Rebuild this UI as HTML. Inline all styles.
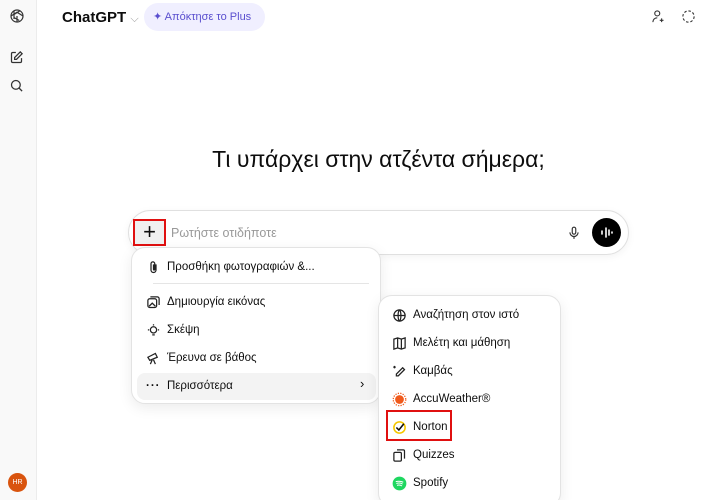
<!DOCTYPE html>
<html><head><meta charset="utf-8"><style>
*{box-sizing:border-box;margin:0;padding:0}
html,body{width:721px;height:500px;overflow:hidden}
body{background:#fff;font-family:"Liberation Sans","DejaVu Sans",sans-serif;color:#0d0d0d;position:relative}
.side{position:absolute;left:0;top:0;width:37px;height:500px;background:#f9f9f9;border-right:1px solid #ececec}
.abs{position:absolute}
.menu{position:absolute;background:#fff;border:1px solid #e3e3e3;border-radius:14px;box-shadow:0 4px 14px rgba(0,0,0,.08)}
.it{position:absolute;left:0;font-size:11.5px;display:flex;align-items:center;height:20px}
.it svg{width:15px;height:15px;margin-right:6px}
</style></head><body>
<div class="side">
 <svg class="abs" style="left:8px;top:7px" width="18" height="18" viewBox="0 0 24 24" fill="none" stroke="#333" stroke-width="1.6"><circle cx="12" cy="12" r="8"/><path d="M8 5v9l7 4M16 5l-8 5v6M4 12l8-5 8 5M12 20v-8"/></svg>
 <svg class="abs" style="left:9px;top:50px" width="15" height="15" viewBox="0 0 24 24" fill="none" stroke="#333" stroke-width="2"><path d="M11 4H6a2 2 0 0 0-2 2v12a2 2 0 0 0 2 2h12a2 2 0 0 0 2-2v-5"/><path d="M18 3l3 3-9 9H9v-3z"/></svg>
 <svg class="abs" style="left:9px;top:78px" width="15" height="15" viewBox="0 0 24 24" fill="none" stroke="#333" stroke-width="2"><circle cx="11" cy="11" r="7"/><path d="M16 16l5 5"/></svg>
 <div class="abs" style="left:8px;top:473px;width:19px;height:19px;border-radius:50%;background:#d9540e;color:#fff;font-size:7px;line-height:19px;text-align:center">HR</div>
</div>
<div class="abs" style="left:62px;top:9px;font-size:15px;font-weight:bold">ChatGPT <span style="color:#999;font-weight:normal;font-size:11px">⌵</span></div>
<div class="abs" style="left:144px;top:3px;width:121px;height:28px;border-radius:14px;background:#f0efff;color:#5a4fcf;font-size:11px;line-height:28px;padding-left:9px">✦ Απόκτησε το Plus</div>
<svg class="abs" style="left:651px;top:9px" width="15" height="15" viewBox="0 0 24 24" fill="none" stroke="#333" stroke-width="1.8"><circle cx="10" cy="7" r="4"/><path d="M3 21c0-4 3-7 7-7M17 15v6M14 18h6"/></svg>
<svg class="abs" style="left:681px;top:9px" width="15" height="15" viewBox="0 0 24 24" fill="none" stroke="#333" stroke-width="1.8" stroke-dasharray="4 3"><circle cx="12" cy="12" r="9"/></svg>
<div class="abs" style="left:0;width:757px;top:146px;text-align:center;font-size:23px;color:#0d0d0d">Τι υπάρχει στην ατζέντα σήμερα;</div>
<div class="abs" style="left:128px;top:210px;width:501px;height:45px;border:1px solid #e0e0e0;border-radius:23px;box-shadow:0 2px 8px rgba(0,0,0,.05)"></div>
<div class="abs" style="left:133px;top:219px;width:33px;height:27px;border:2px solid #e01010;background:#f0f0f0;font-size:22px;line-height:22px;text-align:center;font-weight:300">+</div>
<div class="abs" style="left:171px;top:226px;font-size:12.5px;color:#999">Ρωτήστε οτιδήποτε</div>
<svg class="abs" style="left:567px;top:225px" width="14" height="16" viewBox="0 0 24 24" fill="none" stroke="#333" stroke-width="2"><rect x="9" y="2" width="6" height="12" rx="3"/><path d="M5 11a7 7 0 0 0 14 0M12 18v4"/></svg>
<div class="abs" style="left:592px;top:218px;width:29px;height:29px;border-radius:50%;background:#000"></div>
<svg class="abs" style="left:598px;top:225px" width="17" height="15" viewBox="0 0 17 15" stroke="#fff" stroke-width="1.6" stroke-linecap="round"><path d="M4 6v3M8 3v9M11 5v5M14 7v1"/></svg>

<div class="menu" style="left:131px;top:247px;width:250px;height:157px">
 <div class="abs" style="left:21px;top:35px;width:216px;height:1px;background:#e5e5e5"></div>
 <div class="abs" style="left:5px;top:125px;width:239px;height:27px;border-radius:8px;background:#f3f3f3"></div>
 <div class="it" style="left:14px;top:9px"><svg viewBox="0 0 24 24" fill="none" stroke="#222" stroke-width="2"><path d="M16 7v9a4 4 0 0 1-8 0V6a3 3 0 0 1 6 0v9a1 1 0 0 1-2 0V7"/></svg>Προσθήκη φωτογραφιών &amp;...</div>
 <div class="it" style="left:14px;top:44px"><svg viewBox="0 0 24 24" fill="none" stroke="#222" stroke-width="2"><rect x="3" y="6" width="14" height="14" rx="3"/><path d="M7 3h11a3 3 0 0 1 3 3v10M5 18l5-5 5 5"/></svg>Δημιουργία εικόνας</div>
 <div class="it" style="left:14px;top:72px"><svg viewBox="0 0 24 24" fill="none" stroke="#222" stroke-width="2"><circle cx="12" cy="11" r="5"/><path d="M10 19h4M12 2v2M3 11h2M19 11h2"/></svg>Σκέψη</div>
 <div class="it" style="left:14px;top:100px"><svg viewBox="0 0 24 24" fill="none" stroke="#222" stroke-width="2"><path d="M3 10l12-6 3 6-12 5zM10 14l-3 7M12 14l3 7"/></svg>Έρευνα σε βάθος</div>
 <div class="it" style="left:14px;top:128px"><span style="width:21px;font-weight:bold;letter-spacing:1px">···</span>Περισσότερα</div>
 <div class="abs" style="left:228px;top:128px;font-size:13px">›</div>
</div>

<div class="menu" style="left:378px;top:295px;width:183px;height:212px">
 <div class="it" style="left:13px;top:9px"><svg viewBox="0 0 24 24" fill="none" stroke="#222" stroke-width="2"><circle cx="12" cy="12" r="9"/><path d="M3 12h18M12 3c3 3 3 15 0 18M12 3c-3 3-3 15 0 18"/></svg>Αναζήτηση στον ιστό</div>
 <div class="it" style="left:13px;top:37px"><svg viewBox="0 0 24 24" fill="none" stroke="#222" stroke-width="2"><path d="M3 5l6-2 6 2 6-2v16l-6 2-6-2-6 2zM9 3v16M15 5v16"/></svg>Μελέτη και μάθηση</div>
 <div class="it" style="left:13px;top:65px"><svg viewBox="0 0 24 24" fill="none" stroke="#222" stroke-width="2"><path d="M17 6l3 3-10 10H7v-3zM4 3v4M2 5h4"/></svg>Καμβάς</div>
 <div class="it" style="left:13px;top:93px"><svg viewBox="0 0 24 24"><circle cx="12" cy="12" r="7" fill="#f05a1c"/><circle cx="12" cy="12" r="10" fill="none" stroke="#f05a1c" stroke-width="2" stroke-dasharray="2 2"/></svg>AccuWeather®</div>
 <div class="it" style="left:13px;top:121px"><svg viewBox="0 0 24 24" fill="none"><circle cx="12" cy="12" r="9" stroke="#f5c800" stroke-width="2.5"/><path d="M7 12l4 4 8-10" stroke="#111" stroke-width="2.5"/></svg>Norton</div>
 <div class="it" style="left:13px;top:149px"><svg viewBox="0 0 24 24" fill="none" stroke="#222" stroke-width="2"><rect x="3" y="7" width="12" height="14" rx="2"/><path d="M8 3h10a2 2 0 0 1 2 2v12"/></svg>Quizzes</div>
 <div class="it" style="left:13px;top:177px"><svg viewBox="0 0 24 24"><circle cx="12" cy="12" r="11" fill="#1ed760"/><path d="M6 9c4-1 8-1 12 1M7 12c3-1 7-1 10 1M8 15c3-1 5-1 8 1" stroke="#fff" stroke-width="1.6" fill="none"/></svg>Spotify</div>
</div>
<div class="abs" style="left:386px;top:410px;width:66px;height:31px;border:2px solid #e01010"></div>
</body></html>
